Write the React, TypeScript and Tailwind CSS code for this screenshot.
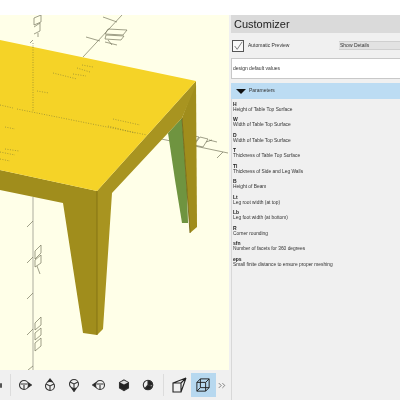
const font = "font-['Liberation_Sans',Arial,sans-serif]";

const params = [
  ["H", "Height of Table Top Surface"],
  ["W", "Width of Table Top Surface"],
  ["D", "Width of Table Top Surface"],
  ["T", "Thickness of Table Top Surface"],
  ["Tl", "Thickness of Side and Leg Walls"],
  ["B", "Height of Beam"],
  ["Lt", "Leg root width (at top)"],
  ["Lb", "Leg foot width (at bottom)"],
  ["R", "Corner rounding"],
  ["sfn", "Number of facets for 360 degrees"],
  ["eps", "Small finite distance to ensure proper meshing"],
];

const Viewport = () => (
  <svg viewBox="0 0 229 355" className="block w-full h-full">
    <g fill="none" stroke="#77775f" strokeWidth="0.7">
      {/* axis ticks and numbers behind the table */}
      <path d="M83 42 L122 0 M103 2 L117 7 M86 22 L100 26" />
      <path d="M108 14 L127 15 L123 20 L105 19 Z M106 20 L124 21 L121 25 L105 24 Z M108 25 L112 30 M105 27 L117 30" />
      <path d="M147 121 L228 138 M179 135 L183 131 M217 143 L223 137" />
      <path d="M184 128 L190 120 L199 122 L193 130 Z M194 130 L200 122 L208 124 L203 132 Z M206 127 L212 125 M209 125 L217 127" />
      <path d="M33 182 V355" stroke="#8a8a80" />
      <path d="M27 212 L33 206 M27 248 L33 242 M27 284 L33 278 M27 320 L33 314 M28 355 L33 351" />
      <path d="M35 236 L41 230 V238 L35 244 Z M35 245 L41 240 V248 L35 252 Z M37 251 L40 259" />
      <path d="M35 308 L41 302 V310 L35 315 Z M35 318 L41 313 V320 L35 325 Z M35 328 L41 323 V331 L35 336 Z" />
      <path d="M34 3 L41 0 V7 L34 10 Z M34 12 L40 8 V16 L34 19 M38 18 V22" />
      <path d="M30 28 L33 25 M28 65 L33 61" />
      <path d="M33 28 V97" strokeDasharray="1 1.5" />
    </g>

    {/* far right leg */}
    <polygon points="168,118 182,103 187,175 188,208 182,208 175,165" fill="#6f9440" />
    <polygon points="182,103 196,66 197,212 190,218 187,175" fill="#a08d1c" />
    <path d="M182 103 L187 175 L190 218" stroke="#6f5f10" strokeWidth="0.8" fill="none" />

    {/* front beams and leg */}
    <polygon points="0,155 97,176 97,320 83,318 63,188 0,175" fill="#a08d1c" />
    <polygon points="97,176 196,66 196,70 182,103 168,118 112,178 103,314 97,320" fill="#a89420" />
    <path d="M97 176 V320" stroke="#7d6d12" strokeWidth="0.8" />

    {/* table top */}
    <polygon points="0,25 196,66 97,176 0,155" fill="#f5d327" />

    {/* dotted lines seen through the top */}
    <g fill="none" stroke="#8d8432" strokeWidth="0.7" strokeDasharray="1 1.5">
      <path d="M33 32 V97 M0 90 L13 93 M17 94 L147 120" />
      <path d="M82 50 L93 52 M77 53 L90 57 M73 59 L86 61 M53 58 L77 64 M37 76 L49 78" />
      <path d="M113 104 L140 110 M108 111 L135 118 M5 112 L15 114 M5 134 L19 136 M0 137 L15 140 M0 144 L10 146" />
    </g>
  </svg>
);

const ViewIcon = ({ children }: { children: React.ReactNode }) => (
  <svg viewBox="0 0 14 14" className="w-[14px] h-[14px]" fill="none" stroke="#333" strokeWidth="1.1">
    {children}
  </svg>
);

const Toolbar = () => (
  <div className="h-[30px] bg-[#f0f0f0] flex items-center">
    <div className="w-[2px] h-[5px] bg-[#555] rounded-full mr-[8px]" />
    <div className="w-px h-[22px] bg-[#dcdcdc] mr-[7px]" />
    <div className="flex items-center gap-[10.7px]">
      <ViewIcon>
        <circle cx="6" cy="7" r="4.5" />
        <path d="M2.5 6 H9.5 M6 7 V11" />
        <path d="M10.5 5 L13.5 7 L10.5 9 Z" fill="#222" />
      </ViewIcon>
      <ViewIcon>
        <circle cx="7" cy="8" r="4.5" />
        <path d="M7 8 V12 M3 6 L7 8 L11 6" />
        <path d="M5 3.5 L7 1 L9 3.5 Z" fill="#222" />
      </ViewIcon>
      <ViewIcon>
        <circle cx="7" cy="6" r="4.5" />
        <path d="M7 6 V10 M3 4 L7 6 L11 4" />
        <path d="M5 10.5 L7 13.5 L9 10.5 Z" fill="#222" />
      </ViewIcon>
      <ViewIcon>
        <circle cx="8" cy="7" r="4.5" />
        <path d="M4.5 6 H11.5 M8 7 V11" />
        <path d="M3.5 5 L0.5 7 L3.5 9 Z" fill="#222" />
      </ViewIcon>
      <ViewIcon>
        <path d="M7 2 L11.5 4.5 V10 L7 12.5 L2.5 10 V4.5 Z" fill="#222" />
        <path d="M3 4.5 L7 6.5 L11 4.5 L7 2.5 Z" fill="#ddd" stroke="none" />
      </ViewIcon>
      <ViewIcon>
        <circle cx="7" cy="7" r="4.7" />
        <path d="M7 2.5 A4.7 4.7 0 0 1 11.7 7 L7 7 Z M7 7 L11 9 A4.7 4.7 0 0 1 4 10.5 Z" fill="#222" />
      </ViewIcon>
    </div>
    <div className="w-px h-[22px] bg-[#dcdcdc] ml-[7.5px] mr-[8px]" />
    <svg viewBox="0 0 16 16" className="w-[16px] h-[16px]" fill="none" stroke="#222" strokeWidth="1.1">
      <path d="M1 6 H9 V15 H1 Z M1 6 L14 1 L9 6 M14 1 L9 15" />
    </svg>
    <div className="w-[25px] h-[24px] ml-[3px] bg-[#b7d8ef] flex items-center justify-center">
      <svg viewBox="0 0 16 16" className="w-[14px] h-[14px]" fill="none" stroke="#222" strokeWidth="1.1">
        <path d="M1 5 L5 1 H15 V11 L11 15 H1 Z M1 5 H11 V15 M11 5 L15 1 M5 1 V11 H15 M5 11 L1 15" />
      </svg>
    </div>
    <svg viewBox="0 0 10 8" className="w-[8px] h-[7px] ml-[2px]" fill="none" stroke="#666" strokeWidth="1">
      <path d="M1 1 L4 4 L1 7 M5.5 1 L8.5 4 L5.5 7" />
    </svg>
  </div>
);

const Customizer = () => (
  <div className={`flex-1 min-w-0 bg-[#f0f0f0] flex flex-col ${font} text-[#333]`}>
    <div className="h-[18px] bg-[#dadada] flex items-center pl-[3px] text-[#222] text-[11px]">Customizer</div>
    <div className="h-[25px] flex items-center pl-[1px]">
      <div className="w-[12px] h-[12px] border border-[#555] bg-[#f8f8f8] flex items-center justify-center">
        <svg viewBox="0 0 12 12" className="w-[10px] h-[10px]" fill="none" stroke="#444" strokeWidth="0.8">
          <path d="M2 6 L5 10 L11 1" />
        </svg>
      </div>
      <span className="text-[5px] ml-[4px] w-[91px]">Automatic Preview</span>
      <div className="flex-1 h-[9px] bg-[#e2e2e2] border-y border-[#cfcfcf] flex items-center text-[5px] pl-[1px]">Show Details</div>
    </div>
    <div className="h-[21px] bg-white border-y border-l border-[#c8c8c8] flex items-center pl-[1px] text-[5px]">design default values</div>
    <div className="h-[16px] mt-[4px] bg-[#bcdcf3] flex items-center pl-[5px]">
      <div className="w-0 h-0 border-x-[5px] border-x-transparent border-t-[5px] border-t-[#111]" />
      <span className="text-[5px] ml-[3px]">Parameters</span>
    </div>
    <div className="flex flex-col pl-[1px] border-l border-[#d8d8d8] flex-1">
      {params.map(([name, desc], i) => (
        <div key={i} className="h-[15.5px] flex flex-col justify-center leading-[6px]">
          <span className="text-[5px] font-bold text-[#222]">{name}</span>
          <span className="text-[4.85px] whitespace-nowrap">{desc}</span>
        </div>
      ))}
    </div>
  </div>
);

export default function App() {
  return (
    <div className="w-[400px] h-[400px] overflow-hidden bg-white flex flex-col">
      <div className="h-[15px] shrink-0 bg-white" />
      <div className="flex-1 min-h-0 flex blur-[0.3px]">
        <div className="w-[229px] shrink-0 flex flex-col">
          <div className="h-[355px] bg-[#ffffe8] overflow-hidden">
            <Viewport />
          </div>
          <Toolbar />
        </div>
        <div className="w-[2px] bg-[#f0f0f0] shrink-0" />
        <Customizer />
      </div>
    </div>
  );
}
